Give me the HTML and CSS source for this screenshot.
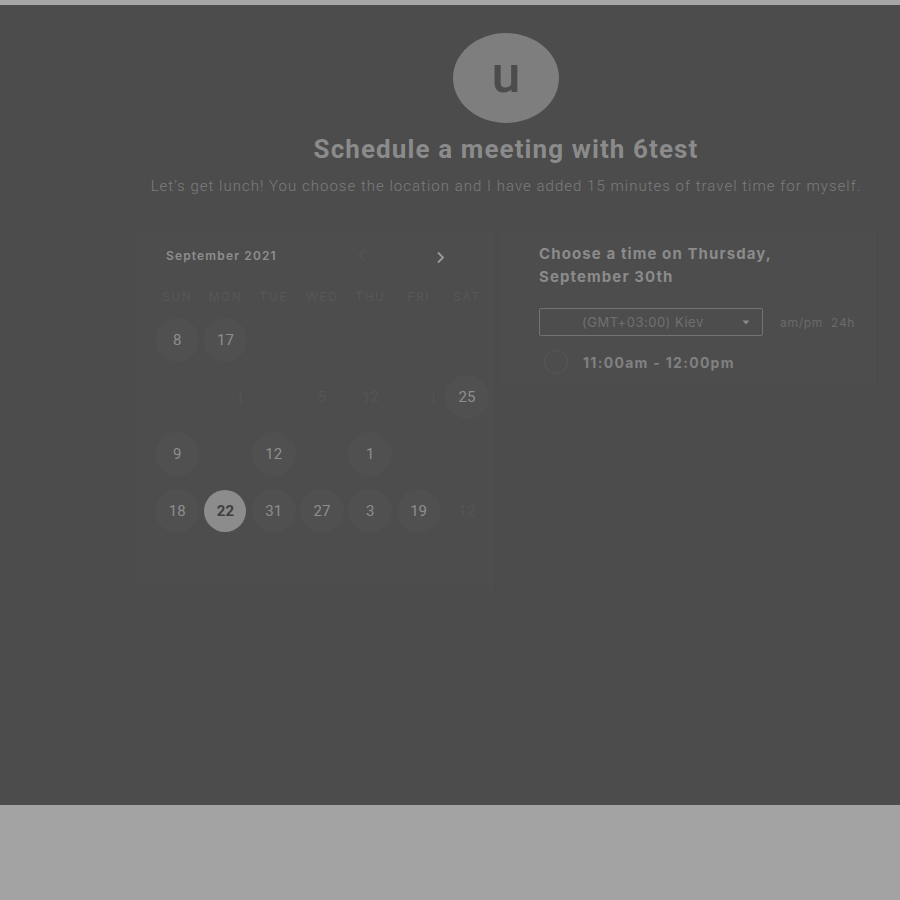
FILE: index.html
```html
<!DOCTYPE html>
<html lang="en">
<head>
<meta charset="utf-8">
<title>Schedule a meeting</title>
<link rel="stylesheet" href="styles.css">
</head>
<body>
<div class="topbar"></div>
<main class="overlay">
  <div class="wrap">
    <div class="avatar">u</div>
    <h1 class="title">Schedule a meeting with 6test</h1>
    <p class="subtitle">Let’s get lunch! You choose the location and I have added 15 minutes of travel time for myself.</p>
    <div class="panels">
      <section class="cal">
        <div class="cal-head">
          <span class="month">September 2021</span>
          <span class="nav">
            <svg class="prev" width="8" height="12" viewBox="0 0 8 12"><path d="M6 1 L1.5 6 L6 11" fill="none" stroke="currentColor" stroke-width="1.6"/></svg>
            <svg class="next" width="9" height="13" viewBox="0 0 9 13"><path d="M2 1.5 L7 6.5 L2 11.5" fill="none" stroke="currentColor" stroke-width="1.8"/></svg>
          </span>
        </div>
        <div class="weekdays">
          <span>SUN</span><span>MON</span><span>TUE</span><span>WED</span><span>THU</span><span>FRI</span><span>SAT</span>
        </div>
        <div class="days">
          <span class="day avail">8</span><span class="day avail">17</span><span class="day"></span><span class="day"></span><span class="day"></span><span class="day"></span><span class="day"></span>
          <span class="day"></span><span class="day ghost shift">|</span><span class="day"></span><span class="day ghost">5</span><span class="day ghost">12</span><span class="day ghost shift">|</span><span class="day avail">25</span>
          <span class="day avail">9</span><span class="day"></span><span class="day avail">12</span><span class="day"></span><span class="day avail">1</span><span class="day"></span><span class="day"></span>
          <span class="day avail">18</span><span class="day selected">22</span><span class="day avail">31</span><span class="day avail">27</span><span class="day avail">3</span><span class="day avail">19</span><span class="day ghost">12</span>
        </div>
      </section>
      <section class="times">
        <h2 class="times-title">Choose a time on Thursday,<br>September 30th</h2>
        <div class="tz-row">
          <div class="select">
            <span>(GMT+03:00) Kiev</span>
            <svg width="8" height="5" viewBox="0 0 8 5"><path d="M0.5 0.5 L7.5 0.5 L4 4.5 Z" fill="currentColor"/></svg>
          </div>
          <span class="fmt">am/pm&nbsp;&nbsp;24h</span>
        </div>
        <label class="slot">
          <span class="radio"></span>
          <span class="slot-text">11:00am - 12:00pm</span>
        </label>
      </section>
    </div>
  </div>
</main>
</body>
</html>
```
FILE: styles.css
```css
html, body {
  margin: 0;
  padding: 0;
}
body {
  background: #a3a3a3;
  font-family: Roboto, "Liberation Sans", sans-serif;
}
.topbar {
  height: 5px;
  background: #a6a6a6;
}
.overlay {
  height: 800px;
  background: #4c4c4c;
  padding-top: 28px;
  box-sizing: border-box;
  overflow: hidden;
}
.wrap {
  margin-left: 137px;
  width: 738px;
  display: flex;
  flex-direction: column;
  align-items: center;
}
.avatar {
  width: 106px;
  height: 90px;
  border-radius: 50%;
  background: #7e7e7e;
  color: #4c4c4c;
  font-family: Roboto, sans-serif;
  font-weight: 500;
  font-size: 52px;
  line-height: 84px;
  text-align: center;
}
.title {
  margin: 11px 0 0;
  font-family: Roboto, sans-serif;
  font-weight: 700;
  font-size: 26px;
  line-height: 30px;
  letter-spacing: 1.1px;
  color: #8b8b8b;
  white-space: nowrap;
}
.subtitle {
  margin: 12px 0 0;
  font-family: Roboto, sans-serif;
  font-weight: 300;
  font-size: 15px;
  line-height: 20px;
  letter-spacing: 1.02px;
  color: #7c7c7c;
  white-space: nowrap;
}
.panels {
  margin-top: 34px;
  align-self: stretch;
  display: flex;
  gap: 8px;
}
.cal {
  width: 355px;
  height: 360px;
  box-sizing: border-box;
  background: #4d4d4d;
  border-right: 1px solid #505050;
  padding: 13px 0 0 16px;
  font-family: Inter, "Open Sans", sans-serif;
}
.cal-head {
  height: 24px;
  display: flex;
  align-items: center;
  justify-content: space-between;
  padding-left: 13px;
  padding-right: 46px;
}
.month {
  font-size: 12px;
  font-weight: 600;
  letter-spacing: 1.15px;
  color: #8e8e8e;
}
.nav {
  display: flex;
  align-items: center;
  gap: 70px;
}
.prev { color: #545454; }
.next { color: #9c9c9c; margin-top: 4px; }
.weekdays {
  margin-top: 19px;
  height: 20px;
  display: grid;
  grid-template-columns: repeat(7, 48.3px);
  align-items: center;
}
.weekdays span {
  text-align: center;
  font-size: 12px;
  letter-spacing: 1.5px;
  color: #575757;
}
.days {
  margin-top: 5px;
  display: grid;
  grid-template-columns: repeat(7, 48.3px);
  grid-auto-rows: 57px;
}
.day {
  justify-self: center;
  align-self: center;
  width: 44px;
  height: 44px;
  border-radius: 50%;
  display: flex;
  align-items: center;
  justify-content: center;
  font-family: Roboto, sans-serif;
  font-size: 15px;
}
.day.avail {
  background: #505050;
  color: #8e8e8e;
}
.day.ghost {
  color: #555555;
}
.day.shift {
  margin-left: 30px;
}
.day.selected {
  width: 42px;
  height: 42px;
  background: #8c8c8c;
  color: #3f3f3f;
  font-weight: 700;
}
.times {
  flex: 1;
  height: 155px;
  box-sizing: border-box;
  background: #4d4d4d;
  border-right: 1px solid #505050;
  padding: 12px 0 0 39px;
  font-family: Inter, "Open Sans", sans-serif;
}
.times-title {
  margin: 0;
  font-size: 15px;
  font-weight: 700;
  line-height: 23px;
  letter-spacing: 1.1px;
  color: #8b8b8b;
}
.tz-row {
  margin-top: 20px;
  display: flex;
  align-items: center;
  gap: 17px;
}
.select {
  width: 224px;
  height: 28px;
  box-sizing: border-box;
  border: 1px solid #737373;
  border-radius: 2px;
  display: flex;
  align-items: center;
  justify-content: space-between;
  padding: 0 12px 0 42px;
  font-size: 13px;
  letter-spacing: 0.5px;
  color: #707070;
}
.select svg { color: #8a8a8a; }
.fmt {
  font-size: 12px;
  color: #6a6a6a;
  letter-spacing: 0.7px;
}
.slot {
  margin-top: 14px;
  display: flex;
  align-items: center;
  gap: 15px;
  padding-left: 5px;
}
.radio {
  width: 22px;
  height: 22px;
  border-radius: 50%;
  border: 1px solid #575757;
}
.slot-text {
  font-size: 14px;
  font-weight: 700;
  color: #818181;
  letter-spacing: 1.3px;
}
```
